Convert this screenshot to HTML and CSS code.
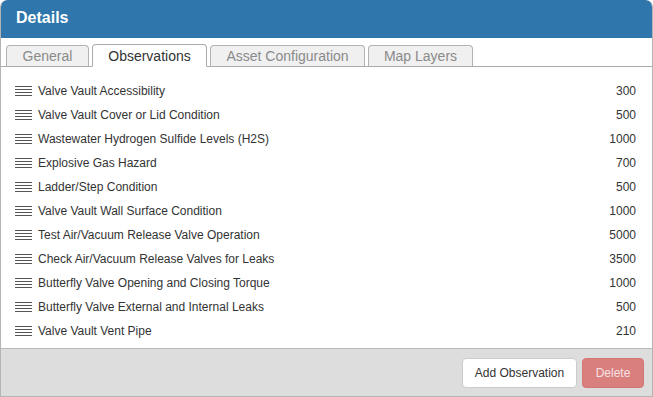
FILE: index.html
```html
<!DOCTYPE html>
<html>
<head>
<meta charset="utf-8">
<link rel="stylesheet" href="styles.css">
</head>
<body>
<div class="panel">
  <div class="header">Details</div>
  <div class="tabs">
    <div class="tab t-general">General</div>
    <div class="tab active t-obs">Observations</div>
    <div class="tab t-asset">Asset Configuration</div>
    <div class="tab t-map">Map Layers</div>
  </div>
  <div class="list">
    <div class="row"><span class="grip"></span><span class="name">Valve Vault Accessibility</span><span class="val">300</span></div>
    <div class="row"><span class="grip"></span><span class="name">Valve Vault Cover or Lid Condition</span><span class="val">500</span></div>
    <div class="row"><span class="grip"></span><span class="name">Wastewater Hydrogen Sulfide Levels (H2S)</span><span class="val">1000</span></div>
    <div class="row"><span class="grip"></span><span class="name">Explosive Gas Hazard</span><span class="val">700</span></div>
    <div class="row"><span class="grip"></span><span class="name">Ladder/Step Condition</span><span class="val">500</span></div>
    <div class="row"><span class="grip"></span><span class="name">Valve Vault Wall Surface Condition</span><span class="val">1000</span></div>
    <div class="row"><span class="grip"></span><span class="name">Test Air/Vacuum Release Valve Operation</span><span class="val">5000</span></div>
    <div class="row"><span class="grip"></span><span class="name">Check Air/Vacuum Release Valves for Leaks</span><span class="val">3500</span></div>
    <div class="row"><span class="grip"></span><span class="name">Butterfly Valve Opening and Closing Torque</span><span class="val">1000</span></div>
    <div class="row"><span class="grip"></span><span class="name">Butterfly Valve External and Internal Leaks</span><span class="val">500</span></div>
    <div class="row"><span class="grip"></span><span class="name">Valve Vault Vent Pipe</span><span class="val">210</span></div>
  </div>
  <div class="footer">
    <button class="btn btn-add">Add Observation</button>
    <button class="btn btn-del">Delete</button>
  </div>
</div>
</body>
</html>
```
FILE: styles.css
```css
* { box-sizing: border-box; }
html, body { margin: 0; padding: 0; background: #fff; }
body { font-family: "Liberation Sans", Arial, sans-serif; color: #333; }
.panel {
  width: 653px;
  height: 397px;
  border: 1px solid #b4b4b4;
  border-top: none;
  border-radius: 7px 7px 0 0;
  display: flex;
  flex-direction: column;
  overflow: hidden;
}
.header {
  height: 38px;
  background: #2e76ab;
  color: #fff;
  font-weight: bold;
  font-size: 16px;
  line-height: 36px;
  padding-left: 16px;
  border-radius: 7px 7px 0 0;
  margin: 0 -1px;
}
.tabs {
  display: flex;
  align-items: flex-end;
  height: 29px;
  padding-left: 5px;
  border-bottom: 1px solid #aaa;
}
.tab {
  height: 22px;
  margin-bottom: -1px;
  margin-right: 3px;
  border: 1px solid #b2b2b2;
  border-bottom-color: #aaa;
  border-radius: 4px 4px 0 0;
  background: #f0f0f0;
  color: #8a8a8a;
  font-size: 14px;
  line-height: 21px;
  text-align: center;
}
.tab.active {
  background: #fff;
  color: #333;
  border-color: #aaa;
  border-bottom-color: #fff;
  height: 23px;
  line-height: 22px;
}
.t-general { width: 83px; }
.t-obs { width: 115px; }
.t-asset { width: 155px; }
.t-map { width: 105px; }
.list {
  flex: 1;
  padding: 12px 16px 0 14px;
}
.row {
  display: flex;
  align-items: center;
  height: 24px;
  font-size: 12px;
}
.grip {
  width: 17px;
  height: 10px;
  margin-right: 6px;
  background: repeating-linear-gradient(to bottom, #555 0, #555 1px, transparent 1px, transparent 3px);
}
.name { flex: 1; }
.val { text-align: right; }
.footer {
  height: 48px;
  background: #ddd;
  border-top: 1px solid #b9b9b9;
  display: flex;
  justify-content: flex-end;
  align-items: center;
  padding-right: 8px;
  gap: 5px;
}
.btn {
  font-family: "Liberation Sans", Arial, sans-serif;
  font-size: 12px;
  height: 30px;
  border-radius: 4px;
  padding: 0;
  cursor: pointer;
}
.btn-add {
  width: 115px;
  background: #fff;
  border: 1px solid #ccc;
  color: #333;
}
.btn-del {
  width: 62px;
  background: #d9807f;
  border: 1px solid #d27573;
  color: #f7e2e2;
}
```
